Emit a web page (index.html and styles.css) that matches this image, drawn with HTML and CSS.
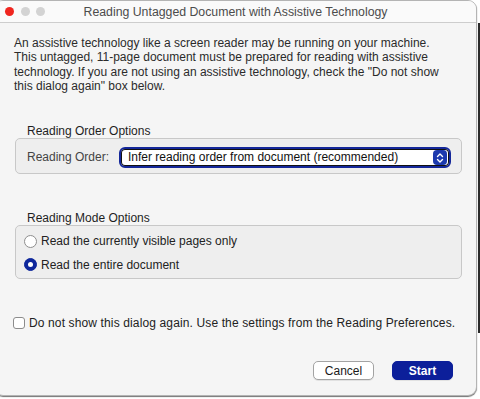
FILE: index.html
```html
<!DOCTYPE html>
<html lang="en">
<head>
  <meta charset="UTF-8">
  <title>Reading Untagged Document with Assistive Technology</title>
  <link rel="stylesheet" href="styles.css">
</head>
<body>
  <div class="window">
    <div class="titlebar">
      <div class="lights">
        <span class="light close"></span>
        <span class="light"></span>
        <span class="light"></span>
      </div>
      <div class="title">Reading Untagged Document with Assistive Technology</div>
    </div>

    <div class="content">
      <p class="intro">An assistive technology like a screen reader may be running on your machine.<br>This untagged, 11-page document must be prepared for reading with assistive<br>technology. If you are not using an assistive technology, check the "Do not show<br>this dialog again" box below.</p>

      <div class="group-label">Reading Order Options</div>
      <div class="group order">
        <span class="field-label">Reading Order:</span>
        <div class="select">
          <span class="select-text">Infer reading order from document (recommended)</span>
          <span class="stepper">
            <svg width="14" height="16" viewBox="0 0 14 16">
              <path d="M4.5 6.5 L7 4 L9.5 6.5" fill="none" stroke="#fff" stroke-width="1.4" stroke-linecap="round" stroke-linejoin="round"/>
              <path d="M4.5 9.5 L7 12 L9.5 9.5" fill="none" stroke="#fff" stroke-width="1.4" stroke-linecap="round" stroke-linejoin="round"/>
            </svg>
          </span>
        </div>
      </div>

      <div class="group-label second">Reading Mode Options</div>
      <div class="group mode">
        <div class="option">
          <span class="radio"></span>
          <span>Read the currently visible pages only</span>
        </div>
        <div class="option">
          <span class="radio checked"></span>
          <span>Read the entire document</span>
        </div>
      </div>

      <div class="check-row">
        <span class="checkbox"></span>
        <span>Do not show this dialog again. Use the settings from the Reading Preferences.</span>
      </div>

      <div class="buttons">
        <div class="btn">Cancel</div>
        <div class="btn primary">Start</div>
      </div>
    </div>
  </div>
</body>
</html>
```

FILE: styles.css
```css
html, body {
  margin: 0;
  padding: 0;
}

body {
  width: 480px;
  height: 399px;
  overflow: hidden;
  background: #fff;
  font-family: "Liberation Sans", Arial, sans-serif;
  font-size: 12px;
  color: #262626;
}

body:after {
  content: '';
  position: fixed;
  top: 23px;
  left: 478px;
  width: 2px;
  height: 310px;
  background: #2a2a2a;
}

.window {
  margin-left: -6px;
  width: 483px;
  height: 396px;
  box-sizing: border-box;
  background: #f5f5f5;
  border: 1px solid #b4b4b4;
  border-radius: 9px;
  box-shadow: 0 1px 1px rgba(0, 0, 0, 0.55);
  overflow: hidden;
}

.titlebar {
  display: grid;
  grid-template-columns: 1fr auto 1fr;
  align-items: center;
  height: 21px;
  background: #fafafa;
  border-bottom: 1px solid #cdcdcd;
}

.lights {
  display: flex;
  gap: 6.5px;
  padding-left: 10px;
}

.light {
  width: 9px;
  height: 9px;
  border-radius: 50%;
  background: #d3d3d3;
}

.light.close {
  background: #f0261f;
}

.title {
  font-size: 12.3px;
  color: #4c4c4c;
  white-space: nowrap;
}

.content {
  padding: 13px 0 0 19px;
}

.intro {
  margin: 0;
  line-height: 14.3px;
  white-space: nowrap;
  color: #2b2b2b;
}

.group-label {
  margin: 31px 0 0 13px;
  line-height: 14px;
  color: #1e1e1e;
}

.group-label.second {
  margin-top: 37px;
}

.group {
  margin-left: 1px;
  width: 447px;
  box-sizing: border-box;
  background: #eeeeee;
  border: 1px solid #c8c8c8;
  border-radius: 5px;
}

.order {
  display: flex;
  align-items: center;
  height: 36px;
  padding: 2px 0 0 11px;
}

.field-label {
  width: 92px;
  color: #444;
}

.select {
  display: flex;
  align-items: center;
  justify-content: space-between;
  width: 332px;
  height: 21px;
  box-sizing: border-box;
  padding: 0 2px 0 7px;
  background: #fff;
  border: 2px solid #14279a;
  border-radius: 6px;
  box-shadow: inset 0 0 0 1px #111;
  color: #111;
}

.stepper {
  display: flex;
  width: 14px;
  height: 15px;
  background: #1c39ae;
  border-radius: 4px;
}

.mode {
  display: flex;
  flex-direction: column;
  gap: 7.4px;
  height: 54px;
  padding: 7px 0 0 8px;
}

.option {
  display: flex;
  align-items: center;
  gap: 4px;
  height: 16px;
  color: #222;
}

.radio {
  width: 13px;
  height: 13px;
  box-sizing: border-box;
  border: 1px solid #8e8e8e;
  border-radius: 50%;
  background: #fff;
  display: flex;
  align-items: center;
  justify-content: center;
}

.radio.checked {
  background: #0e279c;
  border-color: #0e279c;
}

.radio.checked:after {
  content: '';
  width: 5px;
  height: 5px;
  border-radius: 50%;
  background: #fff;
}

.check-row {
  display: flex;
  align-items: center;
  gap: 4px;
  height: 16px;
  margin: 36px 0 0 -1px;
  color: #222;
  white-space: nowrap;
  letter-spacing: 0.13px;
}

.checkbox {
  width: 12px;
  height: 12px;
  box-sizing: border-box;
  border: 1px solid #8c8c8c;
  border-radius: 3px;
  background: #fff;
}

.buttons {
  display: flex;
  justify-content: flex-end;
  gap: 18px;
  width: 439px;
  margin-top: 30px;
}

.btn {
  width: 61px;
  height: 19px;
  box-sizing: border-box;
  display: flex;
  align-items: center;
  justify-content: center;
  border-radius: 5px;
  background: #fff;
  border: 1px solid #a3a3a3;
  box-shadow: 0 1px 0 rgba(0, 0, 0, 0.08);
  color: #1a1a1a;
}

.btn.primary {
  background: #0c1f9a;
  border-color: #0c1f9a;
  color: #fff;
  font-weight: bold;
}
```
